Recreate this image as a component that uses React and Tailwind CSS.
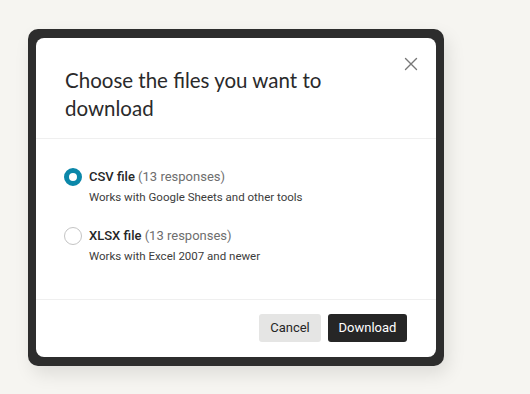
import { useState } from 'react';

const options = [
  { id: 'csv', name: 'CSV file', count: 13, hint: 'Works with Google Sheets and other tools' },
  { id: 'xlsx', name: 'XLSX file', count: 13, hint: 'Works with Excel 2007 and newer' },
];

function Radio({ checked }) {
  return checked ? (
    <span className="mt-[1px] block h-[18px] w-[18px] shrink-0 rounded-full border-[5px] border-[#0b87a9] bg-white" />
  ) : (
    <span className="mt-[1px] block h-[18px] w-[18px] shrink-0 rounded-full border border-[#c4c4c4] bg-white" />
  );
}

export default function App() {
  const [format, setFormat] = useState('csv');

  return (
    <div className="min-h-[394px] w-full bg-[#f6f5f1] pl-[28px] pt-[29px] font-['Roboto',sans-serif]">
      <div className="w-[416px] rounded-[10px] bg-[#2d2d2d] px-[8px] pb-[9px] pt-[9px] shadow-[4px_8px_18px_rgba(0,0,0,0.10)]">
        <div className="rounded-[8px] bg-white">
          {/* header */}
          <div className="relative border-b border-[#efefef] pb-[16px] pl-[29px] pr-[60px] pt-[28px]">
            <h2 className="font-['Lato',sans-serif] text-[20.5px] font-normal leading-[28px] text-[#2a2a2b]">
              Choose the files you want to download
            </h2>
            <button className="absolute right-[16px] top-[17px] p-[2px] text-[#777777]">
              <svg width="14" height="14" viewBox="0 0 14 14" fill="none" stroke="currentColor" strokeWidth="1.4" strokeLinecap="round">
                <path d="M1.5 1.5l11 11M12.5 1.5l-11 11" />
              </svg>
            </button>
          </div>

          {/* options */}
          <div className="flex flex-col gap-[20px] pb-[34px] pl-[28px] pr-[28px] pt-[28px]">
            {options.map((o) => (
              <label key={o.id} className="flex cursor-pointer gap-[7px]" onClick={() => setFormat(o.id)}>
                <Radio checked={format === o.id} />
                <div className="flex flex-col">
                  <div className="text-[13px] leading-[20px] text-[#262627]">
                    <span className="font-medium">{o.name}</span>{' '}
                    <span className="text-[#6e6e6e]">({o.count} responses)</span>
                  </div>
                  <div className="mt-[1px] text-[11.5px] leading-[18px] text-[#3c3c3c]">{o.hint}</div>
                </div>
              </label>
            ))}
          </div>

          {/* footer */}
          <div className="flex justify-end gap-[7px] border-t border-[#efefef] pb-[15px] pr-[29px] pt-[14px]">
            <button className="h-[28px] w-[62px] rounded-[3px] bg-[#e5e5e4] text-[13px] text-[#262627]">Cancel</button>
            <button className="h-[28px] w-[79px] rounded-[3px] bg-[#262626] text-[13px] text-white">Download</button>
          </div>
        </div>
      </div>
    </div>
  );
}
